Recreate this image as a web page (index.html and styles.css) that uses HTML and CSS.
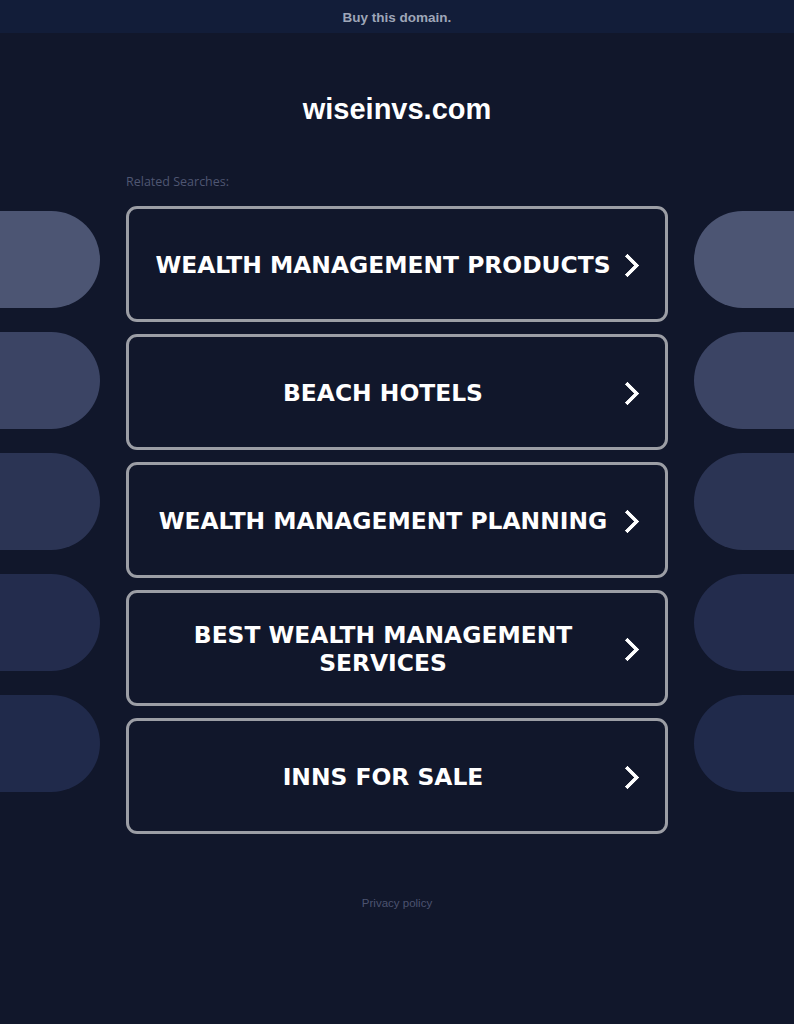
FILE: index.html
```html
<!DOCTYPE html>
<html lang="en">
<head>
    <meta charset="UTF-8">
    <meta name="viewport" content="width=device-width, initial-scale=1.0">
    <title>wiseinvs.com</title>
    <link rel="stylesheet" href="styles.css">
</head>
<body>

    <div class="topbar">
        <a href="#">Buy this domain.</a>
    </div>

    <h1 class="domain">wiseinvs.com</h1>

    <div class="layout">
        <!-- decorative pills, left side -->
        <div class="pills pills-left">
            <span class="pill p1"></span>
            <span class="pill p2"></span>
            <span class="pill p3"></span>
            <span class="pill p4"></span>
            <span class="pill p5"></span>
        </div>

        <main class="searches">
            <p class="related">Related Searches:</p>
            <ul class="search-list">
                <li><a class="search-btn" href="#"><span>WEALTH MANAGEMENT PRODUCTS</span><i class="chev"></i></a></li>
                <li><a class="search-btn" href="#"><span>BEACH HOTELS</span><i class="chev"></i></a></li>
                <li><a class="search-btn" href="#"><span>WEALTH MANAGEMENT PLANNING</span><i class="chev"></i></a></li>
                <li><a class="search-btn" href="#"><span>BEST WEALTH MANAGEMENT SERVICES</span><i class="chev"></i></a></li>
                <li><a class="search-btn" href="#"><span>INNS FOR SALE</span><i class="chev"></i></a></li>
            </ul>
        </main>

        <!-- decorative pills, right side -->
        <div class="pills pills-right">
            <span class="pill p1"></span>
            <span class="pill p2"></span>
            <span class="pill p3"></span>
            <span class="pill p4"></span>
            <span class="pill p5"></span>
        </div>
    </div>

    <footer>
        <a href="#">Privacy policy</a>
    </footer>

</body>
</html>
```

FILE: styles.css
```css
body {
    margin: 0;
    padding: 0;
    background: #11172b;
    font-family: 'Liberation Sans', Arial, sans-serif;
    min-height: 1024px;
}
a {
    text-decoration: none;
}
.topbar {
    height: 33px;
    background: #121d39;
    text-align: center;
}
.topbar a {
    display: inline-block;
    line-height: 35px;
    font-size: 13.5px;
    font-weight: bold;
    color: #9ea6b8;
}
.domain {
    margin: 58px 0 0;
    height: 37px;
    text-align: center;
    color: #fff;
    font-size: 29px;
    line-height: 37px;
}
.layout {
    display: grid;
    grid-template-columns: 100px 1fr 100px;
    margin-top: 45px;
}
.pills {
    display: flex;
    flex-direction: column;
    gap: 24px;
    padding-top: 38px;
}
.pill {
    display: block;
    height: 97px;
}
.pills-left .pill {
    border-radius: 0 49px 49px 0;
}
.pills-right .pill {
    border-radius: 49px 0 0 49px;
}
.p1 { background: #4c5573; }
.p2 { background: #3b4464; }
.p3 { background: #2b3454; }
.p4 { background: #232c4d; }
.p5 { background: #202a4b; }

.searches {
    width: 542px;
    margin: 0 auto;
}
.related {
    margin: 0 0 15px;
    height: 18px;
    line-height: 18px;
    font-size: 12.5px;
    color: #4f5672;
    font-family: 'Open Sans', sans-serif;
}
.search-list {
    list-style: none;
    margin: 0;
    padding: 0;
    display: flex;
    flex-direction: column;
    gap: 12px;
}
.search-btn {
    display: flex;
    align-items: center;
    height: 116px;
    box-sizing: border-box;
    border: 3px solid #9c9ea5;
    border-radius: 11px;
    padding: 2px 27px 0 22px;
    color: #fff;
}
.search-btn span {
    flex: 1;
    text-align: center;
    font-family: 'DejaVu Sans', Verdana, sans-serif;
    font-weight: bold;
    font-size: 23.4px;
    line-height: 28px;
}
.chev {
    width: 13px;
    height: 13px;
    border-right: 4px solid #fff;
    border-bottom: 4px solid #fff;
    border-radius: 1px;
    transform: rotate(-45deg);
    margin: 0 2px 0 4px;
}
footer {
    text-align: center;
    margin-top: 59px;
}
footer a {
    font-size: 11.5px;
    color: #4c5370;
}
```
